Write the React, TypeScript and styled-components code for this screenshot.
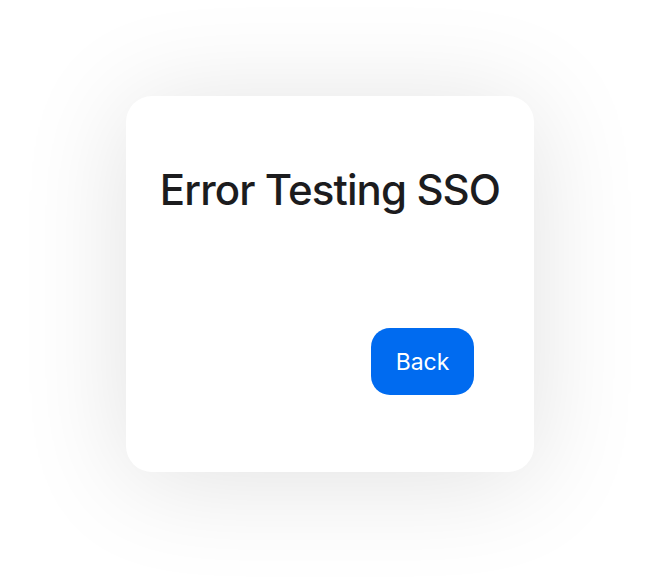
import React from 'react';
import styled, { createGlobalStyle } from 'styled-components';

const GlobalStyle = createGlobalStyle`
  html, body {
    margin: 0;
    padding: 0;
    background: #ffffff;
  }
  body {
    font-family: Inter, "Noto Sans", "Liberation Sans", sans-serif;
    -webkit-font-smoothing: antialiased;
  }
`;

const Page = styled.div`
  width: 664px;
  height: 586px;
  display: flex;
  align-items: flex-start;
  padding: 96px 0 0 126px;
  box-sizing: border-box;
`;

const Card = styled.div`
  width: 408px;
  height: 376px;
  box-sizing: border-box;
  background: #ffffff;
  border-radius: 26px;
  box-shadow: 0 8px 110px rgba(0, 0, 0, 0.12);
  display: flex;
  flex-direction: column;
  padding: 64px 24px 0;
`;

const Title = styled.h1`
  margin: 0;
  font-size: 42px;
  font-weight: 500;
  line-height: 60px;
  letter-spacing: -0.9px;
  color: #1c1c1e;
  text-align: center;
  white-space: nowrap;
`;

const Actions = styled.div`
  display: flex;
  justify-content: flex-end;
  margin-top: 108px;
  padding-right: 36px;
`;

const Button = styled.button`
  width: 103px;
  height: 67px;
  border: none;
  border-radius: 19px;
  background: #006bf0;
  color: #ffffff;
  font-family: Inter, "Noto Sans", "Liberation Sans", sans-serif;
  font-size: 23px;
  font-weight: 400;
  cursor: pointer;
`;

const App = () => (
  <>
    <GlobalStyle />
    <Page>
      <Card>
        <Title>Error Testing SSO</Title>
        <Actions>
          <Button>Back</Button>
        </Actions>
      </Card>
    </Page>
  </>
);

export default App;
